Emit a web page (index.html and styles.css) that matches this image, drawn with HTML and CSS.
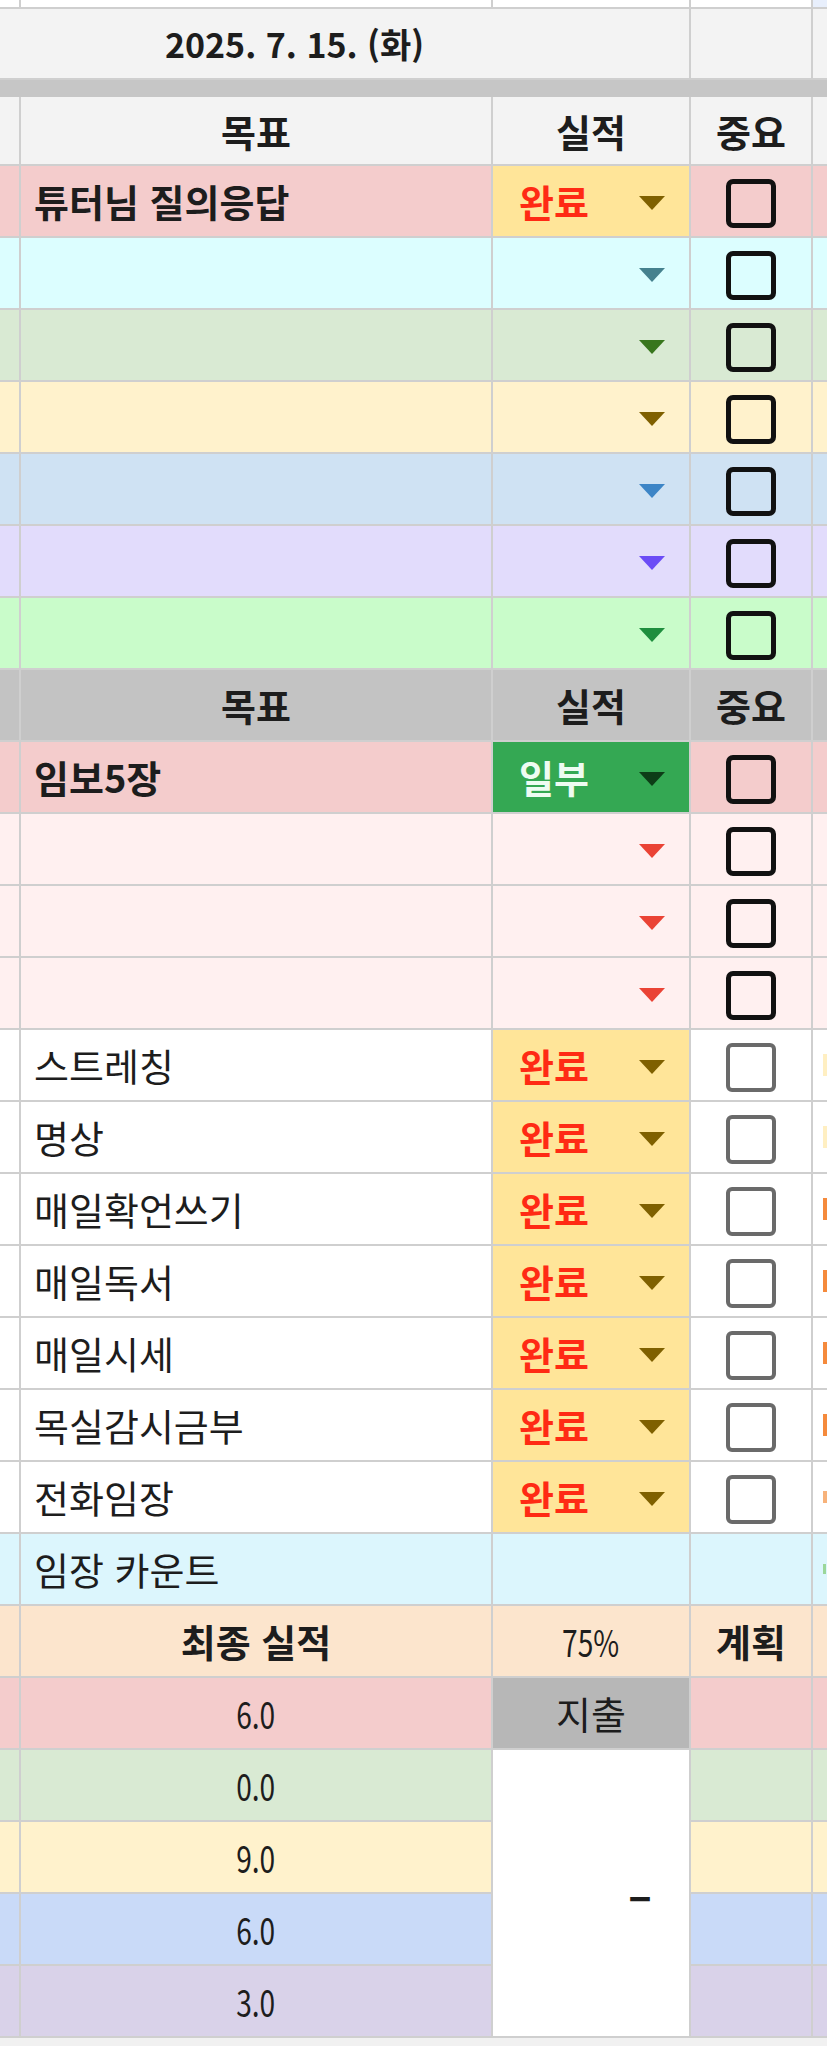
FILE: index.html
```html
<!DOCTYPE html>
<html lang="ko">
<head>
  <meta charset="utf-8">
  <title>2025. 7. 15. (화)</title>
  <link rel="stylesheet" href="styles.css">
</head>
<body>
  <div class="sheet">
    <!-- last row of the frozen area above -->
    <div class="row r-white">
      <div class="cell"></div><div class="cell"></div><div class="cell"></div><div class="cell"></div><div class="cell d tint"></div>
    </div>

    <div class="row r-date">
      <div class="cell date">2025. 7. 15. (화)</div>
      <div class="cell"></div>
      <div class="cell d"></div>
    </div>

    <div class="row"><div class="sep"></div></div>

    <!-- 목표 block 1 -->
    <div class="row r-head1">
      <div class="cell"></div>
      <div class="cell center bold">목표</div>
      <div class="cell center bold">실적</div>
      <div class="cell center bold">중요</div>
      <div class="cell d"></div>
    </div>

    <div class="row r-pink">
      <div class="cell"></div>
      <div class="cell name bold">튜터님 질의응답</div>
      <div class="cell status done"><span class="val">완료</span><i class="arrow olive"></i></div>
      <div class="cell check"><span class="box"></span></div>
      <div class="cell d"></div>
    </div>
    <div class="row r-cyan">
      <div class="cell"></div>
      <div class="cell name"></div>
      <div class="cell status"><span class="val"></span><i class="arrow teal"></i></div>
      <div class="cell check"><span class="box"></span></div>
      <div class="cell d"></div>
    </div>
    <div class="row r-green">
      <div class="cell"></div>
      <div class="cell name"></div>
      <div class="cell status"><span class="val"></span><i class="arrow green"></i></div>
      <div class="cell check"><span class="box"></span></div>
      <div class="cell d"></div>
    </div>
    <div class="row r-yellow">
      <div class="cell"></div>
      <div class="cell name"></div>
      <div class="cell status"><span class="val"></span><i class="arrow olive"></i></div>
      <div class="cell check"><span class="box"></span></div>
      <div class="cell d"></div>
    </div>
    <div class="row r-blue">
      <div class="cell"></div>
      <div class="cell name"></div>
      <div class="cell status"><span class="val"></span><i class="arrow blue"></i></div>
      <div class="cell check"><span class="box"></span></div>
      <div class="cell d"></div>
    </div>
    <div class="row r-lavender">
      <div class="cell"></div>
      <div class="cell name"></div>
      <div class="cell status"><span class="val"></span><i class="arrow violet"></i></div>
      <div class="cell check"><span class="box"></span></div>
      <div class="cell d"></div>
    </div>
    <div class="row r-mint">
      <div class="cell"></div>
      <div class="cell name"></div>
      <div class="cell status"><span class="val"></span><i class="arrow leaf"></i></div>
      <div class="cell check"><span class="box"></span></div>
      <div class="cell d"></div>
    </div>

    <!-- 목표 block 2 -->
    <div class="row r-head2">
      <div class="cell"></div>
      <div class="cell center bold">목표</div>
      <div class="cell center bold">실적</div>
      <div class="cell center bold">중요</div>
      <div class="cell d"></div>
    </div>

    <div class="row r-pink">
      <div class="cell"></div>
      <div class="cell name bold">임보5장</div>
      <div class="cell status part"><span class="val">일부</span><i class="arrow dark"></i></div>
      <div class="cell check"><span class="box"></span></div>
      <div class="cell d"></div>
    </div>
    <div class="row r-blush">
      <div class="cell"></div>
      <div class="cell name"></div>
      <div class="cell status"><span class="val"></span><i class="arrow red"></i></div>
      <div class="cell check"><span class="box"></span></div>
      <div class="cell d"></div>
    </div>
    <div class="row r-blush">
      <div class="cell"></div>
      <div class="cell name"></div>
      <div class="cell status"><span class="val"></span><i class="arrow red"></i></div>
      <div class="cell check"><span class="box"></span></div>
      <div class="cell d"></div>
    </div>
    <div class="row r-blush">
      <div class="cell"></div>
      <div class="cell name"></div>
      <div class="cell status"><span class="val"></span><i class="arrow red"></i></div>
      <div class="cell check"><span class="box"></span></div>
      <div class="cell d"></div>
    </div>

    <!-- 루틴 -->
    <div class="row r-white">
      <div class="cell"></div>
      <div class="cell name">스트레칭</div>
      <div class="cell status done"><span class="val">완료</span><i class="arrow olive"></i></div>
      <div class="cell check"><span class="box light"></span></div>
      <div class="cell d"><i class="peek faint"></i></div>
    </div>
    <div class="row r-white">
      <div class="cell"></div>
      <div class="cell name">명상</div>
      <div class="cell status done"><span class="val">완료</span><i class="arrow olive"></i></div>
      <div class="cell check"><span class="box light"></span></div>
      <div class="cell d"><i class="peek faint"></i></div>
    </div>
    <div class="row r-white">
      <div class="cell"></div>
      <div class="cell name">매일확언쓰기</div>
      <div class="cell status done"><span class="val">완료</span><i class="arrow olive"></i></div>
      <div class="cell check"><span class="box light"></span></div>
      <div class="cell d"><i class="peek"></i></div>
    </div>
    <div class="row r-white">
      <div class="cell"></div>
      <div class="cell name">매일독서</div>
      <div class="cell status done"><span class="val">완료</span><i class="arrow olive"></i></div>
      <div class="cell check"><span class="box light"></span></div>
      <div class="cell d"><i class="peek"></i></div>
    </div>
    <div class="row r-white">
      <div class="cell"></div>
      <div class="cell name">매일시세</div>
      <div class="cell status done"><span class="val">완료</span><i class="arrow olive"></i></div>
      <div class="cell check"><span class="box light"></span></div>
      <div class="cell d"><i class="peek"></i></div>
    </div>
    <div class="row r-white">
      <div class="cell"></div>
      <div class="cell name">목실감시금부</div>
      <div class="cell status done"><span class="val">완료</span><i class="arrow olive"></i></div>
      <div class="cell check"><span class="box light"></span></div>
      <div class="cell d"><i class="peek"></i></div>
    </div>
    <div class="row r-white">
      <div class="cell"></div>
      <div class="cell name">전화임장</div>
      <div class="cell status done"><span class="val">완료</span><i class="arrow olive"></i></div>
      <div class="cell check"><span class="box light"></span></div>
      <div class="cell d"><i class="peek small"></i></div>
    </div>
    <div class="row r-sky">
      <div class="cell"></div>
      <div class="cell name">임장 카운트</div>
      <div class="cell"></div>
      <div class="cell"></div>
      <div class="cell d"><i class="peek count"></i></div>
    </div>

    <!-- 합계 -->
    <div class="row r-peach">
      <div class="cell"></div>
      <div class="cell center bold">최종 실적</div>
      <div class="cell center"><span class="num">75%</span></div>
      <div class="cell center bold">계획</div>
      <div class="cell d"></div>
    </div>
    <div class="row r-pink">
      <div class="cell"></div>
      <div class="cell center"><span class="num">6.0</span></div>
      <div class="cell center spend">지출</div>
      <div class="cell"></div>
      <div class="cell d"></div>
    </div>
    <div class="row r-green">
      <div class="cell"></div>
      <div class="cell center"><span class="num">0.0</span></div>
      <div class="cell merged">–</div>
      <div class="cell"></div>
      <div class="cell d"></div>
    </div>
    <div class="row r-yellow">
      <div class="cell"></div>
      <div class="cell center"><span class="num">9.0</span></div>
      <div class="cell"></div>
      <div class="cell d"></div>
    </div>
    <div class="row r-cornflower">
      <div class="cell"></div>
      <div class="cell center"><span class="num">6.0</span></div>
      <div class="cell"></div>
      <div class="cell d"></div>
    </div>
    <div class="row r-purple">
      <div class="cell"></div>
      <div class="cell center"><span class="num">3.0</span></div>
      <div class="cell"></div>
      <div class="cell d"></div>
    </div>

    <div class="row"><div class="tail"></div></div>
  </div>
</body>
</html>
```

FILE: styles.css
```css
body {
  margin: 0;
  font-family: "Noto Sans CJK KR", "Noto Sans", sans-serif;
  color: #1d1d1d;
  background: #fff;
}

.sheet {
  display: grid;
  grid-template-columns: 21px 472px 198px 122px 14px;
  grid-template-rows: 9px 71px 17px 69px repeat(26, 72px) 8px;
  width: 827px;
  font-size: 38px;
  line-height: 1;
}

.row {
  display: contents;
}

.cell {
  display: flex;
  align-items: center;
  box-sizing: border-box;
  min-width: 0;
  overflow: hidden;
  white-space: nowrap;
  border-right: 2px solid #cfcfcf;
  border-bottom: 2px solid #cfcfcf;
}

.cell.d {
  border-right: none;
}

.bold {
  font-weight: 700;
}

.center {
  justify-content: center;
}

.name {
  padding-left: 13px;
}

.num {
  display: inline-block;
  font-size: 37px;
  transform: scaleX(0.76);
}

/* row colours */
.r-white > .cell { background: #fff; }
.r-date > .cell { background: #f3f3f3; }
.r-head1 > .cell { background: #f3f3f3; }
.r-head2 > .cell { background: #c3c3c3; }
.r-pink > .cell { background: #f4cccc; }
.r-cyan > .cell { background: #dcfeff; }
.r-green > .cell { background: #d9ead3; }
.r-yellow > .cell { background: #fff2cc; }
.r-blue > .cell { background: #cfe2f3; }
.r-lavender > .cell { background: #e2dcfc; }
.r-mint > .cell { background: #c9fcca; }
.r-blush > .cell { background: #fff0f0; }
.r-sky > .cell { background: #dcf6fd; }
.r-peach > .cell { background: #fce5cd; }
.r-cornflower > .cell { background: #c9daf8; }
.r-purple > .cell { background: #d9d2e9; }

.r-white > .cell.tint {
  background: #e8effc;
}

.date {
  grid-column: span 3;
  justify-content: center;
  padding-right: 100px;
  font-size: 34px;
  font-weight: 700;
}

.sep {
  grid-column: 1 / -1;
  background: #c6c6c6;
}

.tail {
  grid-column: 1 / -1;
  background: #f1f1f1;
}

/* 실적 dropdown */
.status {
  justify-content: space-between;
  padding: 0 24px 0 26px;
}

.status .val {
  font-weight: 700;
}

.r-pink > .cell.done,
.r-white > .cell.done {
  background: #ffe599;
}

.done .val {
  color: #ff2a14;
}

.r-pink > .cell.part {
  background: #34a853;
}

.part .val {
  color: #eefcf2;
}

.arrow {
  width: 0;
  height: 0;
  margin-top: 4px;
  border-left: 13px solid transparent;
  border-right: 13px solid transparent;
  border-top: 14px solid #7f6000;
}

.arrow.olive { border-top-color: #7f6000; }
.arrow.teal { border-top-color: #45818e; }
.arrow.green { border-top-color: #38761d; }
.arrow.blue { border-top-color: #3d85c6; }
.arrow.violet { border-top-color: #6b4cf6; }
.arrow.leaf { border-top-color: #1e8e3e; }
.arrow.red { border-top-color: #ea4335; }
.arrow.dark { border-top-color: #0d3d17; }

/* 중요 checkbox */
.check {
  justify-content: center;
}

.box {
  width: 50px;
  height: 49px;
  margin-top: 4px;
  box-sizing: border-box;
  border: 5px solid #111;
  border-radius: 7px;
}

.box.light {
  border: 4px solid #6a6a6a;
  border-radius: 6px;
}

.r-pink > .cell.spend {
  background: #b7b7b7;
}

.r-green > .cell.merged {
  grid-row: span 4;
  background: #fff;
  justify-content: flex-end;
  padding-right: 37px;
  font-size: 44px;
  font-weight: 700;
}

/* edge of the text spilling in from the next column */
.peek {
  width: 4px;
  height: 22px;
  margin-left: 10px;
  background: #f58a3c;
}

.peek.faint {
  background: #ffefc2;
}

.peek.small {
  height: 12px;
  background: #f7b27a;
}

.peek.count {
  width: 3px;
  height: 10px;
  background: #9bd79a;
}
```
